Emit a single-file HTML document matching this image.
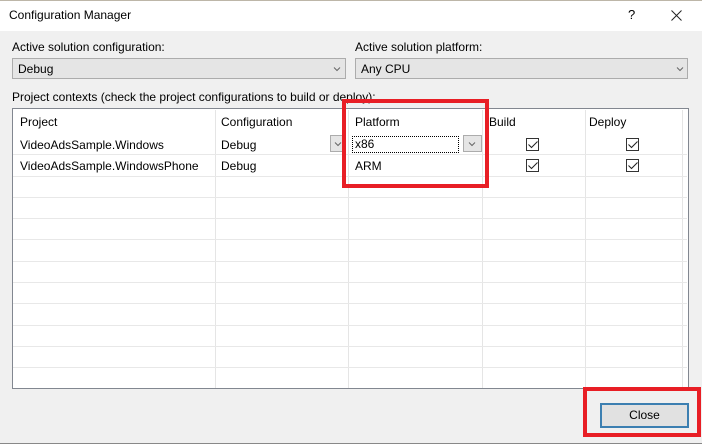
<!DOCTYPE html><html><head><style>
body{margin:0;width:702px;height:444px;background:#f0f0f0;font-family:"Liberation Sans",sans-serif;font-size:12px;color:#000;position:relative;overflow:hidden}
.a{position:absolute}
.dd{position:absolute;background:#e5e5e5;border:1px solid #acacac;box-sizing:border-box;padding:3px 5px;height:21px}
.vl{position:absolute;top:110px;height:278px;width:1px;background:#e5e5e5}
.hl{position:absolute;left:13px;width:674px;height:1px;background:#e8e8e8}
.cb{position:absolute;width:11px;height:11px;border:1px solid #333;background:#fff}
.red{position:absolute;border:4px solid #e81e25;box-sizing:border-box}
</style></head><body>
<div class="a" style="left:0;top:0;width:702px;height:31px;background:#fff;border-top:1px solid #bdb6a8;box-sizing:border-box"></div>
<div class="a" style="left:9px;top:8px">Configuration Manager</div>
<div class="a" style="left:628px;top:7px;font-size:13px">?</div>
<div class="a" style="left:43px;top:61px;background:#e5e5e5"></div>
<div class="dd" style="left:12px;top:58px;width:334px">Debug</div>
<div class="a" style="left:355px;top:40px">Active solution platform:</div>
<div class="a" style="left:12px;top:40px">Active solution configuration:</div>
<div class="dd" style="left:355px;top:58px;width:333px">Any CPU</div>
<div class="a" style="left:12px;top:90px">Project contexts (check the project configurations to build or deploy):</div>
<div class="a" style="left:12px;top:108px;width:677px;height:281px;background:#fff;border:1px solid #828790;box-sizing:border-box"></div>
<div class="vl" style="left:215px"></div><div class="vl" style="left:348px"></div><div class="vl" style="left:482px"></div><div class="vl" style="left:585px"></div><div class="vl" style="left:682px"></div>
<div class="hl" style="top:154px"></div><div class="hl" style="top:176px"></div><div class="hl" style="top:197px"></div><div class="hl" style="top:218px"></div><div class="hl" style="top:239px"></div><div class="hl" style="top:261px"></div><div class="hl" style="top:282px"></div><div class="hl" style="top:303px"></div><div class="hl" style="top:325px"></div><div class="hl" style="top:346px"></div><div class="hl" style="top:367px"></div>
<div class="a" style="left:20px;top:115px">Project</div>
<div class="a" style="left:221px;top:115px">Configuration</div>
<div class="a" style="left:355px;top:115px">Platform</div>
<div class="a" style="left:489px;top:115px">Build</div>
<div class="a" style="left:589px;top:115px">Deploy</div>
<div class="a" style="left:20px;top:138px">VideoAdsSample.Windows</div>
<div class="a" style="left:221px;top:138px">Debug</div>
<div class="a" style="left:330px;top:135px;width:16px;height:17px;background:#e5e5e5;border:1px solid #acacac;box-sizing:border-box"></div>
<div class="a" style="left:352px;top:136px;width:107px;height:17px;border:1px dotted #000;box-sizing:border-box;padding-left:2px;line-height:15px">x86</div>
<div class="a" style="left:463px;top:135px;width:19px;height:17px;background:#e5e5e5;border:1px solid #acacac;box-sizing:border-box"></div>
<div class="a" style="left:20px;top:159px">VideoAdsSample.WindowsPhone</div>
<div class="a" style="left:221px;top:159px">Debug</div>
<div class="a" style="left:355px;top:159px">ARM</div>
<div class="cb" style="left:526px;top:138px"></div><div class="cb" style="left:626px;top:138px"></div>
<div class="cb" style="left:526px;top:159px"></div><div class="cb" style="left:626px;top:159px"></div>
<svg class="a" style="left:0;top:0" width="702" height="444"><g fill="none" stroke="#222" stroke-width="1"><path d="M528.5 144.5l3 3 6-6M628.5 144.5l3 3 6-6M528.5 165.5l3 3 6-6M628.5 165.5l3 3 6-6"/><path d="M671.5 10.5l10 10M681.5 10.5l-10 10"/></g>
<g fill="none" stroke="#666" stroke-width="1"><path d="M334 67.5l3 3 3-3M677 67.5l3 3 3-3M335 142.5l3 3 3-3M469 142.5l3 3 3-3"/></g></svg>
<div class="a" style="left:600px;top:403px;width:89px;height:25px;background:#e1e1e1;border:2px solid #3c7fb1;box-sizing:border-box;text-align:center;line-height:21px">Close</div>
<div class="red" style="left:342px;top:99px;width:147px;height:89px"></div>
<div class="red" style="left:583px;top:387px;width:118px;height:50px"></div>
<div class="a" style="left:0;top:443px;width:702px;height:1px;background:#888"></div>
</body></html>
